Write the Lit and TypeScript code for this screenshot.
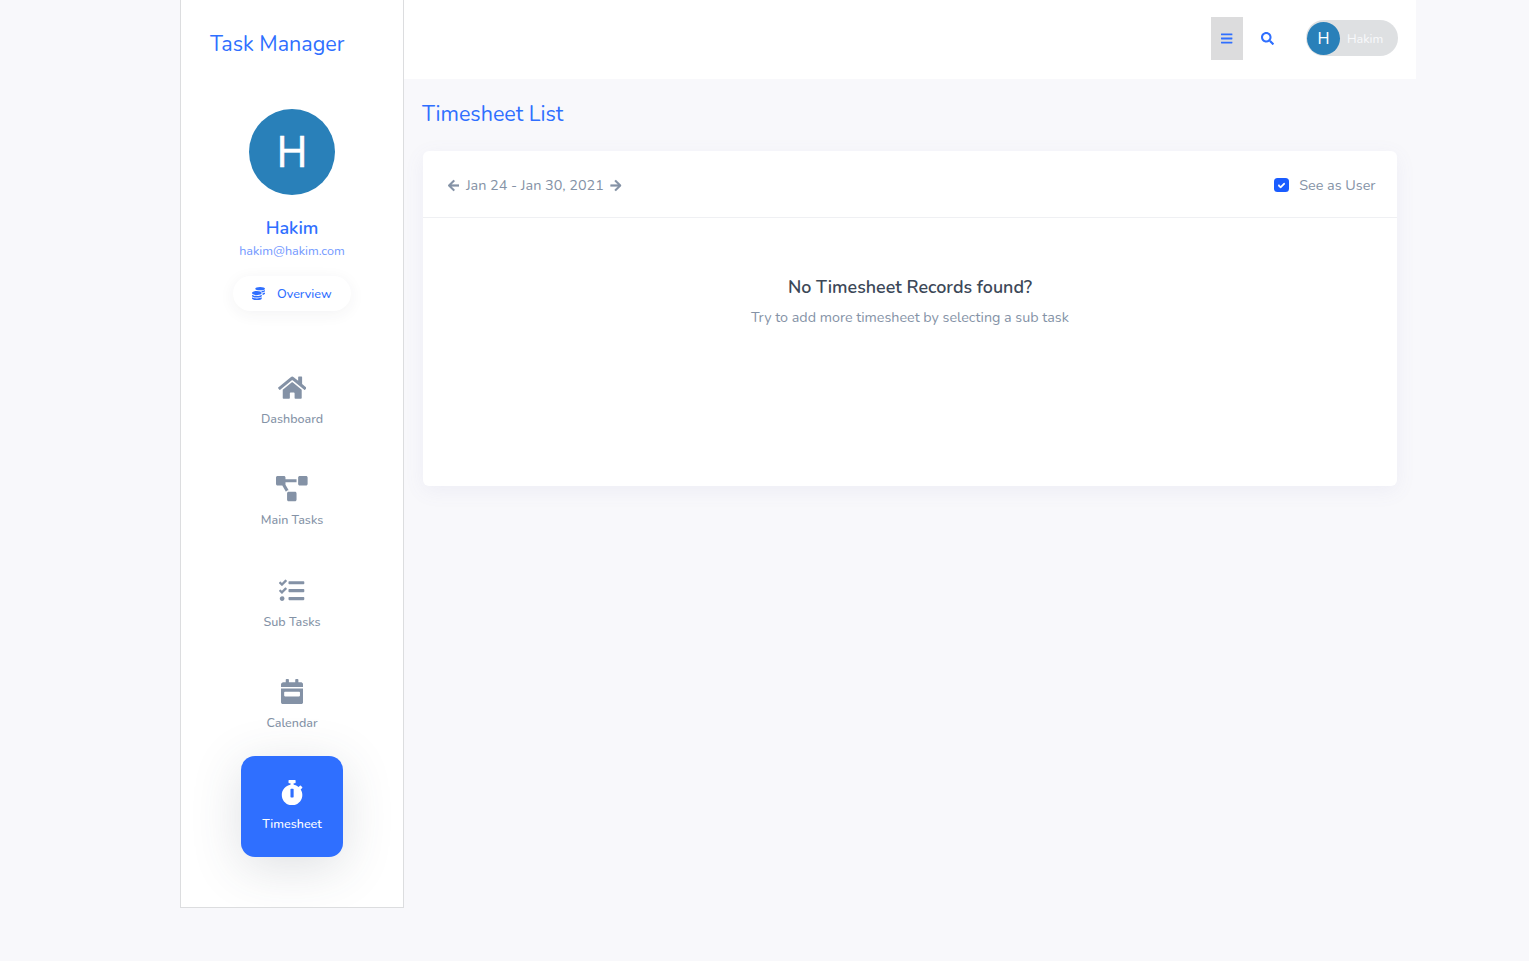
import { LitElement, html, css } from "lit";
import { customElement, property } from "lit/decorators.js";

interface Glyph {
  w: number;
  d: string;
}

const GLYPHS: Record<string, Glyph> = {
  home: { w: 576, d: "M280.37 148.26L96 300.11V464a16 16 0 0 0 16 16l112.06-.29a16 16 0 0 0 15.92-16V368a16 16 0 0 1 16-16h64a16 16 0 0 1 16 16v95.64a16 16 0 0 0 16 16.05L464 480a16 16 0 0 0 16-16V300L295.67 148.26a12.19 12.19 0 0 0-15.3 0zM571.6 251.47L488 182.56V44.05a12 12 0 0 0-12-12h-56a12 12 0 0 0-12 12v72.61L318.47 43a48 48 0 0 0-61 0L4.34 251.47a12 12 0 0 0-1.6 16.9l25.5 31A12 12 0 0 0 45.15 301l235.22-193.74a12.19 12.19 0 0 1 15.3 0L530.9 301a12 12 0 0 0 16.9-1.6l25.5-31a12 12 0 0 0-1.7-16.93z" },
  diagram: { w: 640, d: "M384 320H256c-17.67 0-32 14.33-32 32v128c0 17.67 14.33 32 32 32h128c17.67 0 32-14.33 32-32V352c0-17.67-14.33-32-32-32zM192 32c0-17.67-14.33-32-32-32H32C14.33 0 0 14.33 0 32v128c0 17.67 14.33 32 32 32h95.72l73.16 128.04C211.98 300.98 232.4 288 256 288h.28L192 175.51V128h224V64H192V32zM608 0H480c-17.67 0-32 14.33-32 32v128c0 17.67 14.33 32 32 32h128c17.67 0 32-14.33 32-32V32c0-17.67-14.33-32-32-32z" },
  tasks: { w: 512, d: "M139.61 35.5a12 12 0 0 0-17 0L58.93 98.81l-22.7-22.12a12 12 0 0 0-17 0L3.53 92.41a12 12 0 0 0 0 17l47.59 47.4a12.78 12.78 0 0 0 17.61 0l15.59-15.62L156.52 69a12.09 12.09 0 0 0 .09-17zm0 159.19a12 12 0 0 0-17 0l-63.68 63.72-22.7-22.1a12 12 0 0 0-17 0L3.53 252a12 12 0 0 0 0 17L51 316.5a12.77 12.77 0 0 0 17.6 0l15.7-15.69 72.2-72.22a12 12 0 0 0 .09-16.9zM64 368c-26.49 0-48.59 21.5-48.59 48S37.53 464 64 464a48 48 0 0 0 0-96zm432 16H208a16 16 0 0 0-16 16v32a16 16 0 0 0 16 16h288a16 16 0 0 0 16-16v-32a16 16 0 0 0-16-16zm0-320H208a16 16 0 0 0-16 16v32a16 16 0 0 0 16 16h288a16 16 0 0 0 16-16V80a16 16 0 0 0-16-16zm0 160H208a16 16 0 0 0-16 16v32a16 16 0 0 0 16 16h288a16 16 0 0 0 16-16v-32a16 16 0 0 0-16-16z" },
  calendar: { w: 448, d: "M0 464c0 26.5 21.5 48 48 48h352c26.5 0 48-21.5 48-48V192H0v272zm64-192c0-8.8 7.2-16 16-16h288c8.8 0 16 7.2 16 16v64c0 8.8-7.2 16-16 16H80c-8.8 0-16-7.2-16-16v-64zM400 64h-48V16c0-8.8-7.2-16-16-16h-32c-8.8 0-16 7.2-16 16v48H160V16c0-8.8-7.2-16-16-16h-32c-8.8 0-16 7.2-16 16v48H48C21.5 64 0 85.5 0 112v48h448v-48c0-26.500-21.500-48-48-48z" },
  stopwatch: { w: 448, d: "M432 304c0 114.900-93.100 208-208 208S16 418.900 16 304c0-104 76.300-190.200 176-205.500V64h-28c-6.600 0-12-5.400-12-12V12c0-6.600 5.400-12 12-12h120c6.600 0 12 5.400 12 12v40c0 6.600-5.400 12-12 12h-28v34.500c37.500 5.800 71.700 21.600 99.700 44.600l27.500-27.500c4.700-4.700 12.300-4.700 17 0l28.300 28.300c4.700 4.700 4.700 12.300 0 17l-29.400 29.400-.6.600C419.700 223.300 432 262.200 432 304zm-176 36V188.500c0-6.600-5.400-12-12-12h-40c-6.600 0-12 5.400-12 12V340c0 6.600 5.400 12 12 12h40c6.600 0 12-5.400 12-12z" },
  bars: { w: 448, d: "M16 132h416c8.837 0 16-7.163 16-16V76c0-8.837-7.163-16-16-16H16C7.163 60 0 67.163 0 76v40c0 8.837 7.163 16 16 16zm0 160h416c8.837 0 16-7.163 16-16v-40c0-8.837-7.163-16-16-16H16c-8.837 0-16 7.163-16 16v40c0 8.837 7.163 16 16 16zm0 160h416c8.837 0 16-7.163 16-16v-40c0-8.837-7.163-16-16-16H16c-8.837 0-16 7.163-16 16v40c0 8.837 7.163 16 16 16z" },
  search: { w: 512, d: "M505 442.700L405.300 343c-4.500-4.500-10.600-7-17-7H372c27.600-35.300 44-79.700 44-128C416 93.100 322.900 0 208 0S0 93.100 0 208s93.100 208 208 208c48.300 0 92.700-16.400 128-44v16.300c0 6.400 2.500 12.500 7 17l99.700 99.700c9.400 9.400 24.600 9.400 33.900 0l28.300-28.300c9.400-9.400 9.400-24.600.1-34zM208 336c-70.700 0-128-57.200-128-128 0-70.700 57.200-128 128-128 70.700 0 128 57.200 128 128 0 70.700-57.200 128-128 128z" },
  arrow: { w: 448, d: "M257.500 445.100l-22.200 22.200c-9.400 9.400-24.600 9.400-33.900 0L7 273c-9.400-9.400-9.400-24.600 0-33.900L201.400 44.700c9.400-9.400 24.600-9.400 33.900 0l22.200 22.200c9.500 9.500 9.300 25-.4 34.300L136.600 216H424c13.300 0 24 10.700 24 24v32c0 13.300-10.700 24-24 24H136.600l120.500 114.800c9.800 9.300 10 24.800.4 34.300z" },
  coins: { w: 512, d: "M0 405.300V448c0 35.300 86 64 192 64s192-28.700 192-64v-42.700C342.700 434.400 267.200 448 192 448S41.300 434.400 0 405.300zM320 128c106 0 192-28.700 192-64S426 0 320 0 128 28.700 128 64s86 64 192 64zM0 300.400V352c0 35.300 86 64 192 64s192-28.700 192-64v-51.600c-41.300 34-116.900 51.600-192 51.600S41.300 334.400 0 300.400zm416 11c57.300-11.100 96-31.700 96-55.400v-42.700c-23.200 16.400-57.300 27.600-96 34.500v63.600zM192 160C86 160 0 195.800 0 240s86 80 192 80 192-35.800 192-80-86-80-192-80zm219.300 56.300c60-10.800 100.700-32 100.700-56.300v-42.700c-35.500 25.100-96.500 38.600-160.700 41.800 29.500 14.300 51.200 33.500 60 57.200z" },
  check: { w: 512, d: "M173.898 439.404l-166.400-166.400c-9.997-9.997-9.997-26.206 0-36.204l36.203-36.204c9.997-9.998 26.207-9.998 36.204 0L192 312.690 432.095 72.596c9.997-9.997 26.207-9.997 36.204 0l36.203 36.204c9.997 9.997 9.997 26.206 0 36.204l-294.400 294.401c-9.998 9.997-26.207 9.997-36.204-.001z" },
};

@customElement("fa-icon")
class FaIcon extends LitElement {
  @property() name = "home";
  static styles = css`
    :host { display: inline-flex; height: 1em; line-height: 0; }
    svg { height: 100%; width: auto; fill: currentColor; stroke: currentColor; stroke-width: var(--icon-stroke, 0); display: block; }
  `;
  render() {
    const g = GLYPHS[this.name];
    return html`<svg viewBox="0 0 ${g.w} 512" aria-hidden="true"><path d=${g.d}></path></svg>`;
  }
}

const NAV = [
  { icon: "home", label: "Dashboard", active: false },
  { icon: "diagram", label: "Main Tasks", active: false },
  { icon: "tasks", label: "Sub Tasks", active: false },
  { icon: "calendar", label: "Calendar", active: false },
  { icon: "stopwatch", label: "Timesheet", active: true },
];

@customElement("app-root")
class AppRoot extends LitElement {
  static styles = css`
    :host {
      display: block;
      height: 961px;
      background: #f8f8fb;
      overflow: hidden;
      font-family: Nunito, Lato, "Open Sans", sans-serif;
      color: #8492a6;
      font-size: 14.3px;
    }
    * { box-sizing: border-box; }
    .shell { display: flex; align-items: flex-start; width: 1236px; margin-left: 180px; }
    .sidebar {
      width: 224px; height: 908px; background: #fff; flex: none;
      border: 1px solid #dcdddf; border-top: 0;
      display: flex; flex-direction: column; align-items: center;
      overflow: hidden;
    }
    .brand {
      align-self: flex-start; margin: 29px 0 0 29px; height: 30px; line-height: 30px;
      font-size: 21.5px; font-weight: 400; color: #2f6fff; white-space: nowrap;
    }
    .avatar {
      margin-top: 50px; width: 86px; height: 86px; border-radius: 50%; flex: none;
      background: #2980b9; color: #fff; display: flex; align-items: center; justify-content: center;
      font-family: "Open Sans", sans-serif; font-size: 43.5px; line-height: 1; padding-bottom: 2px;
      -webkit-text-stroke: 0.4px #fff;
    }
    .name { margin-top: 21px; height: 24px; line-height: 24px; font-size: 18px; font-weight: 600; color: #2f6fff; }
    .mail { margin-top: 1px; height: 20px; line-height: 20px; font-size: 12.6px; color: #7399ff; }
    .overview {
      margin-top: 15px; width: 118px; height: 35px; border-radius: 18px; flex: none;
      display: flex; align-items: center; padding-left: 19px; gap: 12px;
      box-shadow: 0 3px 16px rgba(47, 55, 70, 0.06);
      font-size: 12.6px; font-weight: 550; color: #2f6fff;
    }
    .overview fa-icon { font-size: 13px; }
    .nav { margin-top: 40px; display: flex; flex-direction: column; align-items: center; }
    .item {
      width: 102px; height: 101.25px; border-radius: 14px; flex: none;
      display: flex; flex-direction: column; align-items: center; padding-top: 24px;
      font-size: 12.5px; font-weight: 550;
    }
    .item fa-icon { font-size: 25.3px; }
    .item span { margin-top: 8.8px; line-height: 20px; white-space: nowrap; }
    .item.active {
      background: #2f6fff; color: #fff; height: 101px;
      box-shadow: 0 10px 50px rgba(60, 72, 88, 0.17);
    }
    .main { flex: 1; min-width: 0; }
    .topbar {
      height: 79px; background: #fff; display: flex; align-items: center; justify-content: flex-end;
      padding: 0 18px 3px 0; color: #2f6fff;
    }
    .menu { width: 32px; height: 43px; background: #dcdcdd; display: flex; align-items: center; justify-content: center; font-size: 13px; }
    .find { margin-left: 18px; font-size: 13px; }
    .user {
      margin-left: 32px; width: 92px; height: 36px; border-radius: 18px; background: #dee0e2;
      display: flex; align-items: center; padding-left: 1px; color: #f8f9fb; font-size: 12.6px;
    }
    .mini {
      width: 33px; height: 33px; border-radius: 50%; background: #2980b9; color: #fff; margin-right: 7px;
      display: flex; align-items: center; justify-content: center;
      font-family: "Open Sans", sans-serif; font-size: 17px; line-height: 1; padding-bottom: 1px;
    }
    .page { padding: 19px 19px 0; }
    .title { margin: 1px 0 0 -1px; height: 30px; line-height: 30px; font-size: 21.5px; font-weight: 400; color: #2f6fff; }
    .card {
      margin-top: 22px; height: 335px; background: #fff; border-radius: 6px;
      box-shadow: 0 5px 20px rgba(120, 110, 180, 0.08);
    }
    .bar {
      height: 67px; border-bottom: 1px solid #eff0f3; display: flex; align-items: center;
      padding: 2px 21.5px 0 25px; font-size: 14.4px;
    }
    .bar fa-icon { font-size: 13px; --icon-stroke: 8; }
    .next { transform: scaleX(-1); }
    .range { margin: 0 6.5px 0 6.5px; white-space: nowrap; }
    .check {
      margin-left: auto; width: 15px; height: 14px; border-radius: 3.5px; background: #1a5cff; color: #fff;
      display: flex; align-items: center; justify-content: center;
    }
    .bar .check fa-icon { font-size: 7px; --icon-stroke: 40; }
    .see { margin-left: 10px; }
    .empty { padding-top: 56px; display: flex; flex-direction: column; align-items: center; }
    .headline { height: 26px; line-height: 26px; font-size: 17.9px; font-weight: 600; color: #3c4858; }
    .hint { margin-top: 7px; line-height: 22px; }
  `;

  render() {
    return html`
      <div class="shell">
        <aside class="sidebar">
          <div class="brand">Task Manager</div>
          <div class="avatar">H</div>
          <div class="name">Hakim</div>
          <div class="mail">hakim@hakim.com</div>
          <div class="overview"><fa-icon name="coins"></fa-icon><span>Overview</span></div>
          <nav class="nav">
            ${NAV.map((n) => html`<div class="item ${n.active ? "active" : ""}"><fa-icon name=${n.icon}></fa-icon><span>${n.label}</span></div>`)}
          </nav>
        </aside>
        <div class="main">
          <header class="topbar">
            <div class="menu"><fa-icon name="bars"></fa-icon></div>
            <fa-icon class="find" name="search"></fa-icon>
            <div class="user"><div class="mini">H</div><span>Hakim</span></div>
          </header>
          <section class="page">
            <h1 class="title">Timesheet List</h1>
            <div class="card">
              <div class="bar">
                <fa-icon name="arrow"></fa-icon>
                <span class="range">Jan 24 - Jan 30, 2021</span>
                <fa-icon class="next" name="arrow"></fa-icon>
                <div class="check"><fa-icon name="check"></fa-icon></div>
                <span class="see">See as User</span>
              </div>
              <div class="empty">
                <div class="headline">No Timesheet Records found?</div>
                <div class="hint">Try to add more timesheet by selecting a sub task</div>
              </div>
            </div>
          </section>
        </div>
      </div>
    `;
  }
}
